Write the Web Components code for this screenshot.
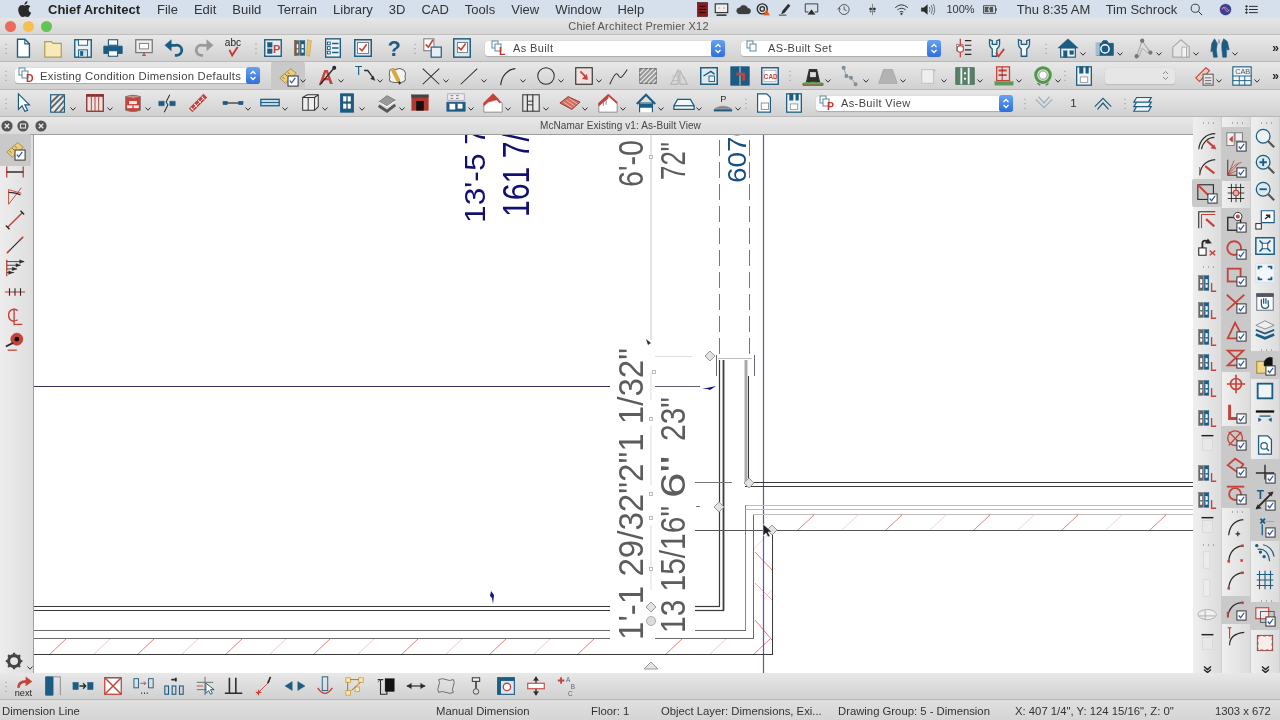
<!doctype html>
<html><head><meta charset="utf-8"><title>Chief Architect</title>
<style>
html,body{margin:0;padding:0;background:#ddd}
body{width:1280px;height:720px;overflow:hidden;font-family:"Liberation Sans",Arial,sans-serif;display:flex;flex-direction:column;color:#333;filter:blur(.35px)}
work-area{flex:none}
</style></head><body>
<menu-bar></menu-bar>
<title-bar>Chief Architect Premier X12</title-bar>
<tool-bar key="t1" style="height:27px"></tool-bar>
<tool-bar key="t2" style="height:28px"></tool-bar>
<tool-bar key="t3" style="height:27px"></tool-bar>
<work-area>
  <view-pane>
    <view-header>McNamar Existing v1: As-Built View</view-header>
    <view-row>
      <tool-bar key="left" vertical origin="135" class="lrail" style="width:34px"></tool-bar>
      <cad-canvas></cad-canvas>
    </view-row>
  </view-pane>
  <tool-bar key="r1" vertical origin="117" rail style="width:29px"></tool-bar>
  <tool-bar key="r2" vertical origin="117" rail style="width:29px"></tool-bar>
  <tool-bar key="r3" vertical origin="117" rail style="width:29px"></tool-bar>
</work-area>
<tool-bar key="bot" style="height:27px"></tool-bar>
<status-bar></status-bar>
<script>
const T='#1d5c82',R='#c5433b',K='#2b2b2b',G='#a9a9a9',LG='#c4c4c4';
const P=(d,c=K,w=1.4,f='none')=>`<path d="${d}" stroke="${c}" stroke-width="${w}" fill="${f}"/>`;
const Q=(x,y,w,h,c=K,f='none',s=1.3)=>`<rect x="${x}" y="${y}" width="${w}" height="${h}" stroke="${c}" stroke-width="${s}" fill="${f}"/>`;
const C=(x,y,r,c=K,f='none',s=1.3)=>`<circle cx="${x}" cy="${y}" r="${r}" stroke="${c}" stroke-width="${s}" fill="${f}"/>`;
const X=(x,y,z,c,s,b='400')=>`<text x="${x}" y="${y}" font-size="${z}" fill="${c}" font-weight="${b}" font-family="Liberation Sans,sans-serif">${s}</text>`;
const B=Q(13,13,10,10,'#333','#fff',1.1)+P('M15 18l2 2.4 4-5.4','#2b55a8',1.3);
const BK=Q(3,4,5,16,'#555','#666',.5)+Q(9,4,5,16,T,T,.5)+Q(4.6,8,2,4,'#fff','#fff',.3)+Q(10.6,8,2,4,'#fff','#fff',.3)+Q(4.6,14,2,3,'#fff','#fff',.3)+Q(10.6,14,2,3,'#fff','#fff',.3);
const BL=BK+P('M17 12v9h5',R,1.5);
const ARC=P('M4 21C5 11 11 5 20 4',K,1.3);
const PALE=P('M6 4h13','#222',1.6)+Q(7,7,11,13,'#d8d8d8','#e8e8e8',1);
const ICONS={
new:P('M6 2.5h8l5 5V22H6z',T,1.5,'#fff')+P('M14 2.5v5h5',T,1.2),
open:P('M3 5h7l2 2h9v15H3z','#b49a58',1.3,'#f8e9b8'),
save:Q(3,3,18,19,T,'#eaf1f5',1.5)+Q(7,3,10,6,T,'#fff',1)+Q(7,14,10,8,T,'#cfdfe8',1)+Q(9,15.5,3,5,T,T,.3),
print:Q(7,3,10,6,T,'#fff',1.2)+P('M2 10h20v8H2z',T,1,T)+Q(7,15,10,6,T,'#fff',1.2),
present:Q(3,3,18,14,'#777','#eee',1.4)+Q(7,7,10,6,'#777','#fff',1)+P('M12 17v3','#c33',1.3)+P('M10 20h4','#c33',1.2),
undo:P('M8 9h6a6 5.5 0 0 1 1 11h-2',T,3)+P('M2 9l7-6v12z',T,.5,T),
redo:P('M16 9h-6a6 5.5 0 0 0-1 11h2','#9a9a9a',3)+P('M22 9l-7-6v12z','#9a9a9a',.5,'#9a9a9a'),
abc:X(2,10,11,'#222','abc')+P('M7 14l3 6 6-9','#c0392b',2),
ref:Q(3,3,18,18,T,'#e8eef2',1.5)+Q(6,6,5,5,T,T,.5)+Q(6,13,5,5,T,T,.5)+X(12,17,12,R,'P','700'),
books:BK+P('M17 3l4 1-2 17-3-1z','#d3a64a',1,'#e8c777')+Q(3,4,2,16,'#7a5a3a','#7a5a3a',.2),
list:Q(4,2,16,20,T,'#eef3f6',1.5)+P('M11 7h7M11 12h7M11 17h7',T,1.6)+Q(6,5.5,3,3,T,'#fff',1)+Q(6,10.5,3,3,T,'#fff',1)+Q(6,15.5,3,3,T,'#fff',1),
chk:Q(3,3,18,18,T,'#dde6ec',1.6)+Q(6,6,12,12,'#777','#fff',1)+P('M8 12l3 3 5-7',R,1.8),
help:X(5,21,24,T,'?','700'),
chk2:Q(2,2,11,13,'#777','#fff',1.1)+P('M4 8l3 3 5-8',R,1.8)+Q(10,11,11,11,T,'#e8eef2',1.3),
chk3:Q(3,2,18,20,T,'#dde6ec',1.6)+Q(7,6,11,11,'#777','#fff',1)+P('M8 11l3 3 5-7',R,1.8),
plan:Q(4,8,7,7,'#888','#fff',1)+P('M13 4h7M13 9h7M13 14h7M13 19h7',K,1.3)+P('M8 2v20',R,1.4)+C(8,13,3.5,R,'#fff'),
wrchk:P('M6 3v5c0 3 2 4 3 5v8h5v-8c1-1 3-2 3-5V3l-3 1v4h-5V4z',T,1.4,'#f2f6f8')+P('M13 17l3 4 6-8',R,2),
wr:P('M6 3v5c0 3 2 4 3 5v8h6v-8c1-1 3-2 3-5V3l-3 1v4h-6V4z',T,1.4,'#f2f6f8'),
house:P('M1 12L12 2l11 10z',T,.5,T)+Q(4,12,16,10,T,'#eef3f6',1.3)+Q(7,15,4,7,T,T,.4)+Q(14,15,4,4,T,T,.4),
cam:P('M3 7h5l2-3h4l2 3h5v13H3z',T,1,T)+C(12,13,4.5,'#fff',T,1.6)+Q(2,6,4,14,'#9fc0d4','#9fc0d4',.4),
cam3:P('M4 21L10 4l9 13',G,1.2)+C(10,4,1.7,'#777','#777')+C(4,21,1.7,'#777','#777')+C(19,17,1.7,'#777','#777')+P('M10 12l-3 9M10 12l8 7',G,1),
gh:P('M3 11L12 3l9 8v11H3z',G,1.3,'#e6e6e6')+Q(13,11,5,11,G,'#f5f5f5',1),
wk:P('M6 2l3 5-1 7 1 8H5l-1-7-2 1 1-9zM16 2l4 3 2 9-2 0-1-3v11h-4l-1-9 0-6z',T,.7,T)+Q(10,3,2,4,G,G,.2),
rule:P('M3 14L15 4l6 5L9 20z','#a98b3c',1,'#eccd7c')+P('M6 13l2 2M9 10l2 2M12 8l2 2','#7a6430',1)+Q(12,12,11,11,'#333','#fff',1.1)+P('M14 17l2 2.4 4-5.4','#2b55a8',1.3),
atext:X(4,21,22,R,'A','700')+P('M5 22L21 3',K,1.5)+C(21,3,1.5,K,K),
tarrow:X(1,11,13,T,'T')+P('M11 6h4l6 8',K,1.4)+P('M23 17l-5-2 3-3z',K,.3,K),
cloud:P('M4 6c2-3 4-1 6-1s3-2 6-1 4 1 5 4-1 3 0 6-2 5-5 5-3 0-6 0-5 0-6-2 1-3 0-5 0-4 0-6z','#666',1.1,'#f4f4f4')+P('M7 4l7 14','#d9a83f',4.4)+P('M14 18l1.4 3','#333',2),
xx:P('M3 4l18 17M21 4L3 21',K,1.1),
line:P('M3 21L21 4',K,1.1),
curve:P('M4 22C5 12 11 5 20 4',K,1.2),
circle:C(12,12,9,K,'none',1.1),
bx:Q(3,3,18,18,K,'#efe1df',1.2)+P('M8 7l7 7',R,2)+P('M16 16l-6-1 5-5z',R,.4,R),
spline:P('M2 21C6 12 9 7 11 11s3 5 10-6',K,1.1),
hatch:Q(3,4,18,16,'#666','#999',1)+P('M3 9l5-5M3 14l10-10M3 19L18 4M7 20L21 6M12 20l9-9M17 20l4-4','#eee',1.2),
pers:P('M3 21h8V5zM13 21h8L13 6z','#aaa',1)+P('M5 17h6M15 14h4M5 12h6','#bbb',1),
ele:Q(3,3,18,18,T,'#dfe9ef',1.6)+P('M6 12l8-5 4 3',T,1.5)+Q(12,12,6,6,T,'#eee',1),
sect:Q(2,2,20,20,T,T,1)+P('M12 2v20','#cfe0ea',1)+P('M8 10h8v7',R,3),
cad:Q(3,3,18,18,T,'#e8eef2',1.5)+Q(5.5,6,13,12,'#aaa','#fff',.8)+X(5.3,15,7,R,'CAD','700'),
term:P('M5 18L8 5h8l3 13z','#333',1.2,'#2e2e2e')+Q(9,8,6,5,'#fff','#ddd',.4)+P('M1 20q11-3 22 0v2H1z','#3e8a3a',1,'#6cab5d')+P('M1 22h22',R,1.3),
pts:P('M4 3l3 9 5 2 5 7',G,1.2)+C(4,3,1.5,'#7f8f9a','#7f8f9a')+C(7,12,1.5,'#7f8f9a','#7f8f9a')+C(12,14,1.5,'#7f8f9a','#7f8f9a')+C(17,21,1.5,'#7f8f9a','#7f8f9a'),
mound:P('M2 20L7 5h10l5 15z','#aaa',1,'#b2b2b2'),
bnd:Q(4,5,13,15,LG,'#eee',1.2)+P('M18 4v4M16 6h4',LG,1),
rails:Q(2,3,20,18,'#3f6b4c','#5a7f66',1)+P('M8 3v18M16 3v18','#eef',2)+P('M12 8v2M12 14v2','#fff',2),
redh:Q(4,2,14,15,R,'#e8d6d6',1.4)+P('M6 6h9M6 11h9',R,2)+Q(2,18,20,4,'#5f9a55','#5f9a55',.4)+P('M10 2v15','#733',1),
wreath:C(12,11,8,'#4d9a45','none',3.2)+C(12,11,4.5,'#888','#fff',1)+P('M6 20l3 2M18 20l-3 2','#666',1.4),
floorp:Q(4,2,16,20,T,'#eef3f6',1.4)+Q(7,2,4,7,T,T,.4)+Q(14,2,3,7,T,T,.4)+Q(8,13,8,6,'#999','#fff',1),
calc:P('M3 14L14 3l4 3L7 18z',R,1.2,'#f0c9b9')+Q(11,10,11,12,'#555','#e8e8e8',1.1)+P('M13 14h7M13 17h7M13 20h7','#555',.9),
cab:Q(2,2,20,20,T,'#f0f4f6',1.2)+X(4.5,10,8,'#456','CAB')+P('M2 12h20M2 17h20M9 12v10M15 12v10',T,1),
arrow:P('M7 2v17l4-4 3 6 3-1-3-6h5z',T,1.3,'#fff'),
wallp:Q(4,3,15,19,T,'#e4edf2',1.3)+P('M4 12l9-9M4 18L19 3M8 22L19 9M14 22l5-6','#666',2),
railing:Q(3,3,18,18,'#8b2a2a','#efe3e0',1.4)+P('M3 4h18','#8b2a2a',2.4)+P('M8 3v18M12 3v18M16 3v18','#a84a44',1.1),
cabi:P('M4 5q8-3 16 0v15q-8 3-16 0z','#777',1,'#ce4034')+P('M4 5q8 3 16 0','#777',1.2,'#d6d6d6')+Q(8,10,8,3,'#fff','#eee',.4)+Q(6,15,5,2.4,'#fff','#eee',.4)+Q(13,15,5,2.4,'#fff','#eee',.4),
brk:P('M3 10h6v5H3zM15 10h6v5h-6z',T,.5,T)+P('M15 3L11 11l2 3-4 8',K,1.1),
stairs:P('M4 20L20 4',R,5.6)+P('M7 18L18 7','#fff',.9)+P('M4 17l3 3M8 13l3 3M12 9l3 3M16 5l3 3','#fff',1.1),
dim1:P('M2 12h20',K,1.3)+Q(1,10,5,4,T,T,.3)+Q(18,10,5,4,T,T,.3),
dim2:Q(2,8,20,7,T,'#c3dde8',1.4)+P('M2 11.5h20',T,1.1),
cabinet:P('M4 6l5-3h12v13l-4 4H4z','#333',1.1,'#eee')+P('M4 6h13v14M17 6l4-3M10 6v14','#333',1.1),
door2:Q(5,2,14,20,T,T,1)+Q(8,5,3,5,'#fff','#fff',.4)+Q(13,5,3,5,'#fff','#fff',.4)+Q(8,13,3,5,'#fff','#fff',.4)+Q(13,13,3,5,'#fff','#fff',.4),
stepsq:P('M3 11l9-7 9 5-9 6z','#777',1,'#999')+P('M3 15l9 6 9-7','#555',3)+P('M3 11l9 5 9-6','#fff',1.1),
fire:Q(3,4,18,16,'#b13a30','#b13a30',.5)+Q(3,3,18,3,'#444','#444',.4)+Q(8,10,8,10,'#111','#111',.4),
win:Q(3,2,18,7,'#99b','#eee',.8)+P('M6 4h3M12 4h3M6 7h3M12 7h3','#777',1)+Q(2,11,20,10,T,T,.6)+Q(5,13,6,6,'#fff','#fff',.2)+Q(14,13,5,5,'#fff','#fff',.2),
roofr:P('M2 12L12 2l10 10v10H2z','#888',1,'#fff')+P('M2 12L12 2l6 6-11 3-5 4z',R,.7,R)+P('M12 3l8 9',R,2),
cols:Q(3,3,18,18,'#555','#e8e8e8',1.4)+P('M8 3v18M14 3v18',K,1.2)+P('M8 10h6M8 14h6',K,1),
roofp:P('M1 12l9-7 13 6-9 8z','#8f3a33',1,'#d26c5e')+P('M5 11l9 6M8 9l9 6M11 7l9 6','#f4d8c8',.8),
roofh:P('M2 12l10-9 10 9v10H2z','#888',1,'#fff')+P('M12 3l-10 9v3l10-8z',R,1,R)+P('M12 3l10 9',R,2)+P('M7 11v4M10 9v5','#888',1),
arch:P('M2 13L12 3l10 10',T,2.4)+P('M5 22V12h14v10',T,1.3,'#fff')+Q(5,13,14,4,T,T,.4),
slab:P('M1 15l4-7h14l4 7v4H1z',T,1.4,'#f4f7f9')+P('M1 15h22',T,1.4),
lvl:X(9,11,10,K,'P')+P('M3 18q9-5 18 0z','#666',.4,'#888')+P('M2 20h20',T,2.4),
doc2:P('M5 2h10l4 4v16H5z',T,1.3,'#fff')+Q(9,12,8,7,'#888','#fff',1),
dn:P('M3 8l9 9 9-9M6 5l6 7 6-7','#9bb0bd',1.3),
up:P('M3 16l9-9 9 9M6 19l6-7 6 7',T,1.3),
layers:P('M5 6h16l-3 5H2zM5 11h16l-3 5H2zM5 16h16l-3 5H2z',T,1.3,'#eef3f6'),
gear:C(11,11,6,'#444','none',3.4)+P('M11 2v4M11 16v4M2 11h4M16 11h4M4.5 4.5l3 3M14.5 14.5l3 3M17.5 4.5l-3 3M7.5 14.5l-3 3','#444',2.4),
dimtool:P('M3 6v12M21 6v12',R,1.4)+P('M3 12h18',K,1.6),
ang:P('M5 21L19 3',R,1)+P('M5 21V5l14 4',R,1)+P('M5 8q8 0 13 3',K,1.3),
lnrd:P('M4 20L20 4',R,1.6)+P('M2 18l4 4M18 2l4 4',K,1.6),
lnpl:P('M4 20L20 4',K,1.3)+P('M3 21l4-4M17 7l4-4',R,1.6),
lead:P('M3 3v18',R,1.4)+P('M3 5h19M3 9h15M3 13h11M3 17h8',K,.9)+P('M22 5l-5-2v4zM18 9l-5-2v4zM14 13l-5-2v4zM10 17l-5-2v4z',K,.3,K),
tape:P('M1 12h22',R,1.2)+P('M6 8v8M12 8v8M18 8v8',K,1.2),
center:P('M15 5c-5-3-10-1-10 5s5 8 10 5',R,1.5)+P('M11 3v18M11 20h9',R,1.5),
tilt:C(14,10,6.5,R,R,1)+C(14,10,2,'#111','#111')+P('M2 18l8-4',K,2)+P('M4 22h10',R,1.4),
arcs:P('M3 21C4 11 11 4 21 4M6 21C7 14 13 8 20 8',K,1.2)+P('M12 12l8 7',R,2.4)+P('M22 21l-6-1 4-4z',R,.3,R),
arc2:P('M4 21C5 11 11 5 21 4','#333',1.2)+P('M4 21v-9',R,1)+P('M10 11l10 8',R,2.4),
corner:Q(2,3,17,16,K,'none',1.2)+P('M2 3l15 15',R,2)+Q(13,13,10,10,'#333','#fff',1.1)+P('M15 18l2 2.4 4-5.4','#2b55a8',1.3),
corner2:P('M3 21V3h18',K,1.2)+P('M6 21V6h15',R,1.2)+P('M11 11l9 8',R,2.4),
rot:Q(3,13,8,8,K,'#fff',1.2)+P('M7 13V8a3 3 0 0 1 6 0',K,2)+P('M13 3l4 5h-7z',K,.3,K)+P('M15 16l6 5M21 16l-6 5',R,1.6),
bookL:BL,
pale:PALE,
paleN:Q(8,3,7,18,'#d8d8d8','#ececec',1),
paleO:P('M3 9c6-4 14-4 18 0s-4 9-10 8-11-4-8-8z','#aaa',1,'#eee')+P('M3 13h18M10 7v10','#aaa',1),
panel:Q(2,3,8,14,'#777','#f2f2f2',1)+P('M8 7l-3 3 3 3z',R,1,R)+Q(11,3,8,9,'#777','#eee',1)+B,
fan:P('M3 21V4M3 21h18',K,1)+P('M3 21L10 5M3 21L15 8M3 21L20 12',R,.9)+P('M3 21C6 13 12 8 18 7','#a44',.8)+B,
grid:P('M3 6h18M3 12h18M3 18h18M7 2v20M12 2v20M17 2v20',K,1)+C(12,12,3,R,'#ddb0a8',1.2),
sqc:Q(3,7,14,14,K,'none',1.5)+C(14,6,4.5,K,'#fff',1)+C(14,6,1.5,R,R)+B,
rc:C(10,11,7.5,R,'none',2)+B,
rs:Q(3,4,14,14,R,'none',2)+B,
rx:P('M2 3l19 17M21 3L2 20',R,2)+B,
rt:P('M11 3l9 17H3z',R,2)+B,
rh:P('M3 4h17L3 20h17z',R,2)+B,
cross:C(12,12,6,R,'none',1.8)+P('M12 2v20M2 12h20',R,1.8),
rl:P('M5 3v15h14',R,3.2)+B,
rcx:C(11,10,8,R,'none',1.5)+P('M4 3l15 15M18 3L4 18',R,1.3)+B,
rd:P('M3 10l8-7 9 6-6 9z',R,2)+B,
rtan:C(11,12,6.5,R,'none',2)+P('M2 4h19',R,2)+B,
arcp:ARC+P('M14 17v5M11.5 19.5h5',K,1.3),
arcd:ARC+Q(3,20,2.4,2.4,R,R,.3)+Q(18,3,2.4,2.4,R,R,.3)+Q(17,19,2.5,2.5,R,R,.3),
arcc:ARC+Q(3,20,2.4,2.4,R,R,.3)+Q(18,3,2.4,2.4,R,R,.3),
arcb:P('M3 20C4 11 9 5 18 4',K,1.3)+P('M3 20v-6',R,2)+Q(18,3,2.4,2.4,R,R,.3)+B,
arcv:P('M5 22C5 14 11 9 21 8',K,1.3)+P('M5 3v12',R,1.3)+P('M3 3h4',R,1.3),
zlens:C(10,9,7.5,T,'#eaf2f6',1.4)+P('M15 14l7 7','#555',2.4),
zin:C(10,9,7.5,T,'#dce9f1',1.4)+P('M6 9h8M10 5v8',T,2)+P('M15 14l7 7','#555',2.4),
zout:C(10,9,7.5,T,'#dce9f1',1.4)+P('M6 9h8',T,2)+P('M15 14l7 7','#555',2.4),
zcor:P('M8 16V3h14v13H8',T,1.3,'#fff')+Q(2,17,6,6,K,'#fff',1.1)+P('M12 12l5-4M13 8h4v3',K,1.6),
fitx:Q(2,3,20,18,T,'#eaf2f6',1.6)+P('M6 6l12 12M18 6L6 18',T,1.8)+Q(9,9,6,6,T,'#fff',1),
fitc:Q(2,2,20,20,'#cfe0ea','#f4f8fa',1)+P('M5 8V5h4M19 8V5h-4M5 16v3h4M19 16v3h-4',T,2),
hand:Q(3,3,18,18,'#778','#fff',1.2)+P('M3 3h18v3H3z','#556',1,'#556')+P('M8 14V9m2.5 5V8m2.5 6V8m2.5 7V10M8 14q0 5 4 5t4-4',T,1.4),
stack:P('M2 8l10-5 10 5-10 4z','#888',1,'#eee')+P('M2 13l10 4 10-4',T,2)+P('M2 18l10 4 10-4',T,3),
hsbd:Q(3,8,12,13,'#a98b3c','#f1d78a',1.2)+P('M11 9A7 7 0 0 1 20 4v9h-9z','#111',.5,'#111')+B,
bsq:Q(4,4,16,16,T,'#eef5f9',2),
barr:P('M2 6h20','#111',2.5)+P('M6 11h12',T,1.4)+P('M8 15l-3-2v4zM16 15l3-2v4z',T,.6,T),
dsrch:P('M5 2h10l4 4v16H5z',T,1.4,'#fff')+C(11,13,3.5,T,'#fff')+P('M13.5 15.5l3 3',T,1.5),
crs:P('M12 3v16M2 12h20',K,1.5)+B,
tar:X(3,11,13,T,'T','700')+P('M3 21L20 4',K,2)+P('M21 3l-6 1 4 4zM2 22l6-1-4-4z',K,.3,K)+B,
xln:P('M7 3l5 5M12 3L7 8',T,2)+P('M9 9v12',T,1.4)+P('M13 6h9',G,1.2)+B,
dcur:P('M4 8c8-1 12 4 13 13M10 3c6 1 11 6 12 13',T,1.3)+C(3,4,1.2,T,T)+C(7,11,1.2,T,T)+C(11,16,1.2,T,T),
bgrid:P('M3 6h18M3 12h18M3 18h18M6 2v20M12 2v20M18 2v20',T,1.2),
sqs:Q(2,3,14,12,R,'#eee',1.2)+Q(7,7,15,12,'#555','none',1)+B,
dsq:Q(4,4,16,16,'#333','none',1.6)+Q(4,4,16,16,'#c9463e','#f6eeea',1.6).replace('/>',' stroke-dasharray="3 3"/>'),
next:X(3,23,10,'#222','next')+P('M7 14q0-7 9-7',R,3)+P('M22 7l-7-5v10z',R,.3,R),
doorb:P('M4 2h8v20H4z',T,1,T)+P('M12 2h8v20','#888',1),
swap:Q(1,8,6,8,T,T,.4)+Q(17,8,6,8,T,T,.4)+P('M8 12h7M12 9l3 3-3 3',K,1.4),
xbox:Q(3,3,18,18,R,'#fff',1.4)+P('M3 3l18 18M21 3L3 21',R,1.6)+P('M3 3h18','#2e6d92',1),
movd:Q(1,4,5,10,T,'none',1)+Q(17,4,5,10,T,'none',1)+P('M8 9h6M12 7l2 2-2 2',R,1)+P('M9 20h1M12 20h1M15 20h1',K,1.6),
rept:P('M9 5h5M14 3v4',K,2)+Q(2,12,4,9,T,'none',1.2)+Q(10,12,4,9,T,'none',1.2)+Q(18,12,4,9,T,'none',1.2),
curs:P('M12 2v20M3 8h18M3 16h18','#666',1)+P('M3 12h7',R,1)+P('M13 9v11l3-3 2 4 2-1-2-4h4z',T,1,'#fff'),
ubar:P('M7 3v17M14 3v17M2 20h19',K,1.7),
pin:P('M3 21l14-14',R,1)+P('M15 9l3-7',K,1.8)+P('M2 19h6M5 16v6',R,1.3),
bow:P('M1 12l8-5v10zM23 12l-8-5v10z',T,.4,T),
mir:Q(9,2,6,15,T,'none',1)+P('M4 14q8 12 16 0',R,1.5),
sel:Q(2,3,5,5,'#c9a845','#f7e9ba',1)+Q(16,3,5,5,'#c9a845','#f7e9ba',1)+Q(2,17,5,5,'#c9a845','#f7e9ba',1)+Q(12,13,5,5,'#c9a845','#f7e9ba',1)+P('M4 8v9M7 5h9M8 17l10-9',R,.9),
fil:P('M3 5h6M6 5v16h7V8',K,1.2)+Q(11,4,10,14,'#111','#111',.4)+P('M3 8l3-3',R,1),
harr:P('M2 12h20',K,1.3)+P('M2 12l5-3v6zM22 12l-5-3v6z',K,.3,K),
wav:P('M4 5q4-2 8 0t8 0q2 3 0 7t0 7q-4 2-8 0t-8 0q-2-3 0-7t0-7z','#666',1),
ibar:Q(8,3,8,4,'#444','#eee',1.2)+P('M12 7v8',K,1.6)+C(12,18,3,'#444','#ddd',1),
pic:Q(3,3,18,18,T,T,1.4)+Q(6,6,15,15,T,'#dbe7ee',1)+C(13,13,4,R,'#fff',1.4),
bars:P('M12 2v20',K,1.4)+Q(3,9,18,6,R,'#fff',1.2)+P('M12 2l-3 4h6zM12 22l-3-4h6z',K,.3,K),
pab:P('M2 6h7M5.5 2.5v7',R,2)+X(11,8,7,'#567','A')+X(16,15,7,'#567','B')+X(13,23,7,'#567','C'),
film:Q(4,1,16,22,'#3b0b0b','#8a1a1a',1)+P('M7 7h10M7 12h10M7 17h10','#200',1.6),
face:Q(2,3,20,14,K,'#eee',1.8)+P('M8 9v1M16 9v1',K,2)+P('M4 21h16',K,2.4),
mcloud:P('M6 19a5 5 0 0 1 0-10 7 7 0 0 1 13 1 4.5 4.5 0 0 1 0 9z','#3d3d3d',.5,'#3d3d3d'),
cc:C(10,11,8,K,'none',2.2)+C(10,11,3.5,K,'none',2)+P('M17 12l5 9h-10z','#e25a1c',.3,'#e25a1c'),
pen:P('M18 3L9 14l-2 5 5-2L21 6z',K,.5,K)+P('M3 21h12',K,1.4),
air:P('M2 3h20v13h-5M7 16H2V3',K,1.4)+P('M12 12l6 8H6z',K,.3,K),
clock:C(13,12,8,K,'none',1.2)+P('M13 7v5l4 2',K,1.2)+P('M2 12l3-3 2 3',K,1),
dots:P('M12 3v18',K,.8)+C(9,11,1.6,K,K)+C(15,11,1.6,K,K)+C(9,15,1.2,'#777','#777')+C(15,15,1.2,'#777','#777'),
wifi:P('M2 9q10-9 20 0M5.5 12.5q6.5-5 13 0M9 16q3-2 6 0',K,1.5)+C(12,19,1.2,K,K),
vol:P('M2 9h4l6-5v16l-6-5H2z',K,.3,K)+P('M15 8q2 4 0 8M18 5q4 7 0 14M21 3q5 9 0 18','#444',1.1),
batt:Q(1,6,19,12,K,'none',1.2)+Q(3,8,13,8,'#333','#555',.3)+P('M21 10v4',K,1.6)+P('M11 7l-3 6h3l-2 4','#fff',1.2),
srch:C(10,10,6.5,K,'none',1.4)+P('M15 15l6 6',K,1.6),
siri:C(12,12,9,'#2c2f66','#3a3f93',.4)+P('M6 12q3-6 6 0t6 0','#d05ea4',2)+P('M7 10q5-5 10 4','#8ad',1.2),
mlist:C(4,7,1.3,K,K)+C(4,12,1.3,K,K)+C(4,17,1.3,K,K)+P('M8 7h14M8 12h14M8 17h14',K,1.6),
};
const BARS={
t1:'hd@6 new@23 open@53 save@83 print@113 present@144 undo@174 redo@204 abc@234 sep@256 ref@273 books@303 list@333 chk@363 help@394 sep@415 chk2@433 chk3@462'.split(' ').concat([
 {sel:'As Built',g:'L',x0:485,x1:725,tx:513},{sel:'AS-Built Set',g:'s',x0:741,x1:941,tx:768}],
 'plan@964 wrchk@995 wr@1024 sep@1046 house@1068~ cam@1105~ cam3@1144~ gh@1181~ wk@1220~'.split(' '),[{more:1,x:1275}]),
t2:['hd@6',{sel:'Existing Condition Dimension Defaults',g:'D',x0:15,x1:260,tx:40,tight:1},
 ...'rule@288!~ atext@326~ tarrow@365~ cloud@397 xx@431~ line@469~ curve@508~ circle@546~ bx@584~ spline@619 hatch@648 pers@679 ele@709 sect@740 cad@770 sep@790 term@813~ pts@851~ mound@888~ bnd@929~ rails@965~ redh@1004~ wreath@1043~ sep@1065 floorp@1084'.split(' '),
 {blank:1,x0:1105,x1:1175},'calc@1204~','cab@1242~',{more:1,x:1275}],
t3:['hd@6',...'arrow@23 wallp@58~ railing@95~ cabi@133~ brk@167 stairs@198 dim1@233~ dim2@270~ cabinet@310~ door2@347~ stepsq@387~ fire@420 win@456~ roofr@493~ cols@531~ roofp@570~ roofh@608~ arch@646~ slab@684~ lvl@723~ sep@746 doc2@764 floorp@794'.split(' '),
 {sel:'As-Built View',g:'P',x0:816,x1:1013,tx:841},'sep@1025','dn@1044',{text:'1',x0:1070,x1:1077},'up@1103','sep@1125','layers@1143'],
left:'rule@150! dimtool@172 ang@196 lnrd@220 lnpl@245 lead@268 tape@292 center@317 tilt@341 gear@662~'.split(' '),
r1:'dots@123 arcs@141 arc2@167 corner@193! corner2@220 rot@247 dots@267 bookL@283 bookL@310 bookL@337 bookL@362 bookL@388 bookL@418 pale@443 bookL@473 bookL@500 pale@525 dots@545 paleN@560 paleN@588 paleO@615 pale@642 dbl@669'.split(' '),
r2:'dots@123 panel@141! fan@167! grid@193 sqc@222! rc@249! rs@276! rx@303! rt@331! rh@358! cross@384 rl@413 rcx@440! rd@467! rtan@494! dots@512 arcp@527 arcd@553 arcc@580 arcb@610! arcv@636'.split(' '),
r3:'dots@123 zlens@139 zin@165 zout@192 zcor@219 fitx@246 fitc@273 hand@302 stack@329 dots@350 hsbd@365! bsq@391 barr@417 dsrch@445 crs@473! tar@500! xln@527! dcur@553 bgrid@580 dots@601 sqs@616! dsq@643 dbl@669'.split(' '),
bot:'hd@6 next@23 doorb@53 swap@83 xbox@113 movd@144 rept@174 curs@205 ubar@234 pin@265 bow@295 mir@325 sel@355 fil@386 harr@416 wav@446 ibar@476 pic@506 bars@536 pab@567'.split(' '),
menu:'film@702 face@721 mcloud@743 cc@763 pen@784 air@811 clock@843 dots@872 wifi@901 vol@927'.split(' ').concat([{text:'100%',x0:945,x1:976,lit:1},'batt@990',{text:'Thu 8:35 AM',x0:1015,x1:1092,lit:1,big:1},{text:'Tim Schrock',x0:1103,x1:1180,lit:1,big:1}],'srch@1196 siri@1225 mlist@1251'.split(' '))
};
class ToolIcon extends HTMLElement{
 connectedCallback(){
  const n=this.getAttribute('name'),s=+(this.getAttribute('size')||22),sh=this.attachShadow({mode:'open'});
  sh.innerHTML=`<style>:host{display:block;position:relative;width:${s}px;height:${s}px;flex:none}
  :host([active])::before{content:"";position:absolute;inset:var(--act,-3px);background:#c9c9c9;border-radius:2px}
  svg{position:relative;display:block;width:100%;height:100%;overflow:visible}
  .ch{position:absolute;left:100%;top:68%;width:6px;height:4px;margin-left:1px}</style>
  <svg viewBox="0 0 24 24">${ICONS[n]||''}</svg>${this.hasAttribute('menu')?'<svg class="ch" viewBox="0 0 6 4"><path d="M.5 .5L3 3.2 5.5 .5" fill="none" stroke="#333" stroke-width="1"/></svg>':''}`;
 }
}
customElements.define('tool-icon',ToolIcon);
class DropSelect extends HTMLElement{
 connectedCallback(){
  const sh=this.attachShadow({mode:'open'});
  const g=this.getAttribute('glyph'),L=this.getAttribute('label'),pad=+this.getAttribute('pad'),tr=this.hasAttribute('tight');
  sh.innerHTML=`<style>:host{display:flex;align-items:center;height:15px;background:#fff;border-radius:3px;position:relative;flex:none;font:${tr?11.3:11}px "Liberation Sans",sans-serif;color:#444;box-shadow:0 .5px 1px #aaa;letter-spacing:${tr?.26:.38}px}
  .g{position:absolute;left:${pad-22}px;top:-1px;width:17px;height:17px}
  .t{padding-left:${pad}px;white-space:nowrap;flex:1}
  .st{width:14px;height:17px;margin:-1px 0;background:linear-gradient(#67a3ef,#2e6fdb);border-radius:3px;display:flex}
  .st svg{width:14px;height:17px}</style>
  <svg class="g" viewBox="0 0 17 17"><rect x="1" y="1" width="6" height="7" fill="#fff" stroke="#5a8aa8" stroke-width="1"/><rect x="4" y="4" width="6" height="7" fill="#fff" stroke="#5a8aa8" stroke-width="1"/>${g==='s'?'':`<text x="8" y="15" font-size="10.5" font-weight="700" fill="#c0392b" font-family="Liberation Sans,sans-serif">${g}</text>`}</svg>
  <span class="t">${L}</span><span class="st"><svg viewBox="0 0 14 17"><path d="M4.5 7L7 4.5 9.5 7M4.5 10L7 12.5 9.5 10" fill="none" stroke="#fff" stroke-width="1.3"/></svg></span>`;
 }
}
customElements.define('drop-select',DropSelect);
class ToolBar extends HTMLElement{
 connectedCallback(){
  const v=this.hasAttribute('vertical'),org=+(this.getAttribute('origin')||0),sh=this.attachShadow({mode:'open'}),rail=this.hasAttribute('rail'),plain=this.getAttribute('key')==='menu';
  sh.innerHTML=`<style>:host{display:flex;flex:none;box-sizing:border-box;flex-direction:${v?'column':'row'};align-items:center;
   ${plain?'':v?(rail?'background:linear-gradient(90deg,#efefef,#dcdcdc);border-right:1px solid #cfcfcf;--act:-3px -4px;':'background:linear-gradient(90deg,#ededed,#dedede);border-right:1px solid #9d9d9d;padding-right:3px;--act:-5px -5px;'):'background:linear-gradient(#e8e8e8,#d1d1d1);border-bottom:1px solid #b8b8b8;--act:-3px -6px;'}}
   .hd,.sep{flex:none;width:2px;height:13px;background:radial-gradient(circle,#aaa 0.9px,transparent 1px) 0 0/2px 4.5px}
   .dots{flex:none;width:13px;height:2px;background:radial-gradient(circle,#aaa 0.8px,transparent 1px) 0 0/5px 2px}
   .txt{flex:none;font-size:11.5px;color:#333;text-align:center;white-space:nowrap}
   .more{flex:none;font:700 12px "Liberation Sans",sans-serif;color:#222;width:10px;text-align:center;letter-spacing:-1px}
   .dbl{flex:none;width:9px;height:7px}
   .blank{flex:none;height:16px;background:#e6e6e6;border-radius:3px;display:flex;justify-content:flex-end;align-items:center;padding-right:6px;box-sizing:border-box;box-shadow:0 .5px 1px #bbb}
   </style>`;
  let cur=org,size=+(this.getAttribute('isize')||22);
  const add=(el,start,len)=>{el.style[v?'marginTop':'marginLeft']=(start-cur)+'px';cur=start+len;sh.appendChild(el);return el;};
  for(const it of BARS[this.getAttribute('key')]){
   if(typeof it==='string'){
    const m=it.match(/^(\w+)@(\d+)([!~]*)$/),n=m[1],c=+m[2],f=m[3];
    if(n==='sep'||n==='hd'){const e=document.createElement('span');e.className='sep';add(e,c-1,2);continue;}
    if(n==='dots'&&v){const e=document.createElement('span');e.className='dots';add(e,c-1,2);continue;}
    if(n==='dbl'){const e=document.createElement('span');e.className='dbl';e.innerHTML='<svg viewBox="0 0 9 7" width="9" height="7" style="display:block"><path d="M1 .5l3.5 3L8 .5M1 3.5l3.5 3L8 3.5" fill="none" stroke="#222" stroke-width="1.4"/></svg>';add(e,c-3,7);continue;}
    const e=document.createElement('tool-icon');e.setAttribute('name',n);e.setAttribute('size',size);
    if(f.includes('!'))e.setAttribute('active','');if(f.includes('~'))e.setAttribute('menu','');
    add(e,c-size/2,size);
   }else if(it.sel){
    const e=document.createElement('drop-select');e.setAttribute('label',it.sel);e.setAttribute('glyph',it.g);e.setAttribute('pad',it.tx-it.x0);if(it.tight)e.setAttribute('tight','');
    e.style.width=(it.x1-it.x0)+'px';add(e,it.x0,it.x1-it.x0);
   }else if(it.blank){
    const e=document.createElement('span');e.className='blank';e.style.width=(it.x1-it.x0)+'px';
    e.innerHTML='<svg width="7" height="11" viewBox="0 0 7 11"><path d="M1 4l2.5-2.5L6 4M1 7l2.5 2.5L6 7" fill="none" stroke="#888"/></svg>';add(e,it.x0,it.x1-it.x0);
   }else if(it.more){
    const e=document.createElement('span');e.className='more';e.textContent='»';add(e,it.x-5,10);
   }else if(it.text){
    const e=document.createElement('span');e.className='txt';e.textContent=it.text;e.style.width=(it.x1-it.x0)+'px';
    if(it.lit){e.style.fontSize=it.big?'13px':'11px';e.style.color='#333';}
    add(e,it.x0,it.x1-it.x0);
   }
  }
 }
}
customElements.define('tool-bar',ToolBar);
class MenuBar extends HTMLElement{
 connectedCallback(){
  const sh=this.attachShadow({mode:'open'});
  sh.innerHTML=`<style>:host{display:flex;flex:none;height:18px;background:#d6e0ec;font:13px "Liberation Sans",sans-serif;color:#333;align-items:center}
  .ap{width:14px;height:16px;margin-left:18px;flex:none}
  .n{display:flex;gap:16px;margin-left:16px;flex:none;white-space:nowrap}
  b{color:#222;margin-right:1px}
  .x{flex:1;display:flex;justify-content:flex-end}</style>
  <svg class="ap" viewBox="0 0 14 16"><path d="M10.6 8.4c0-1.9 1.6-2.8 1.7-2.9-.9-1.3-2.3-1.5-2.8-1.5-1.2-.1-2.3.7-2.9.7s-1.5-.7-2.5-.7C2.8 4 1.6 4.8.9 6c-1.4 2.4-.4 6 1 8 .7 1 1.5 2 2.5 2 1 0 1.4-.6 2.6-.6s1.6.6 2.6.6 1.8-1 2.4-2c.8-1.1 1.1-2.2 1.1-2.3-.1 0-2.5-.9-2.5-3.3zM8.7 2.6c.5-.6.9-1.5.8-2.4-.8 0-1.7.5-2.3 1.2-.5.6-.9 1.5-.8 2.3.9.1 1.8-.4 2.3-1.1z" fill="#2a2a2a"/></svg>
  <div class="n"><b>Chief Architect</b><span>File</span><span>Edit</span><span>Build</span><span>Terrain</span><span>Library</span><span>3D</span><span>CAD</span><span>Tools</span><span>View</span><span>Window</span><span>Help</span></div>
  <div class="x"><menu-tray></menu-tray></div>`;
 }
}
customElements.define('menu-bar',MenuBar);
class MenuTray extends HTMLElement{
 connectedCallback(){
  this.attachShadow({mode:'open'}).innerHTML=`<style>:host{display:block;flex:none;width:630px}tool-bar{height:18px;width:630px}</style><tool-bar key="menu" isize="15" origin="650"></tool-bar>`;
 }
}
customElements.define('menu-tray',MenuTray);
class TitleBar extends HTMLElement{
 connectedCallback(){
  this.attachShadow({mode:'open'}).innerHTML=`<style>:host{display:flex;flex:none;height:17px;align-items:center;background:linear-gradient(#e6e6e6,#d6d6d6);border-bottom:1px solid #c0c0c0;box-sizing:border-box;font:11px "Liberation Sans",sans-serif;color:#555;letter-spacing:.2px}
  .d{display:flex;gap:7px;padding-left:5px;width:48px;flex:none}
  i{width:11px;height:11px;border-radius:50%;display:block}
  .t{flex:1;text-align:center;padding-right:56px}</style>
  <div class="d"><i style="background:#ec6a5e"></i><i style="background:#f4bf4f"></i><i style="background:#61c554"></i></div><div class="t"><slot></slot></div>`;
 }
}
customElements.define('title-bar',TitleBar);
class WorkArea extends HTMLElement{
 connectedCallback(){this.attachShadow({mode:'open'}).innerHTML=`<style>:host{display:flex;height:556px;flex:none}</style><slot></slot>`;}
}
customElements.define('work-area',WorkArea);
class ViewPane extends HTMLElement{
 connectedCallback(){this.attachShadow({mode:'open'}).innerHTML=`<style>:host{display:flex;flex-direction:column;width:1193px;flex:none}</style><slot></slot>`;}
}
customElements.define('view-pane',ViewPane);
class ViewRow extends HTMLElement{
 connectedCallback(){this.attachShadow({mode:'open'}).innerHTML=`<style>:host{display:flex;flex:1;min-height:0}</style><slot></slot>`;}
}
customElements.define('view-row',ViewRow);
class ViewHeader extends HTMLElement{
 connectedCallback(){
  const b=g=>`<svg width="12" height="12" viewBox="0 0 12 12"><circle cx="6" cy="6" r="5.6" fill="#555"/>${g}</svg>`;
  const x='<path d="M3.8 3.8l4.4 4.4M8.2 3.8L3.8 8.2" stroke="#eee" stroke-width="1.3"/>';
  this.attachShadow({mode:'open'}).innerHTML=`<style>:host{display:flex;height:18px;flex:none;align-items:center;background:linear-gradient(#e8e8e8,#dadada);border-bottom:1px solid #9e9e9e;box-sizing:border-box;font:10px "Liberation Sans",sans-serif;color:#444;letter-spacing:.08px}
  .b{display:flex;gap:4px;padding-left:1px;flex:none;width:53px}.b svg{flex:none}.b svg:last-child{margin-left:2px}
  .t{margin-left:486px;white-space:nowrap}</style>
  <div class="b">${b(x)}${b('<rect x="3.4" y="4" width="5.2" height="4" fill="none" stroke="#eee"/>')}${b(x)}</div><div class="t"><slot></slot></div>`;
 }
}
customElements.define('view-header',ViewHeader);
class StatusBar extends HTMLElement{
 connectedCallback(){
  const cells=[['Dimension Line',2],['Manual Dimension',436],['Floor: 1',591],['Object Layer: Dimensions, Exi...',661],['Drawing Group: 5 - Dimension',838],['X: 407 1/4", Y: 124 15/16", Z: 0"',1015],['1303 x 672',1215]];
  this.attachShadow({mode:'open'}).innerHTML=`<style>:host{display:block;height:20px;flex:none;background:linear-gradient(#dfdfdf,#d5d5d5);font:11.3px/22px "Liberation Sans",sans-serif;color:#333}
  .g{display:grid;grid-template-columns:${cells.map((c,i)=>(i<cells.length-1?cells[i+1][1]-c[1]:65)+'px').join(' ')};padding-left:2px}
  span{white-space:nowrap}</style><div class="g">${cells.map(c=>`<span>${c[0]}</span>`).join('')}</div>`;
 }
}
customElements.define('status-bar',StatusBar);
class CadCanvas extends HTMLElement{
 connectedCallback(){
  const D='#3a3a3a',M='#6a6a6a',L='#bdbdbd';
  const ln=(x1,y1,x2,y2,c=D,w=1,e='')=>`<line x1="${x1}" y1="${y1}" x2="${x2}" y2="${y2}" stroke="${c}" stroke-width="${w}" ${e}/>`;
  const rt=(x,y,len,size,c,s)=>`<text transform="translate(${x},${y}) rotate(-90)" font-size="${size}" fill="${c}" font-family="Liberation Sans,sans-serif" textLength="${len}" lengthAdjust="spacingAndGlyphs">${s}</text>`;
  const dia=(x,y)=>`<path d="M${x} ${y-5}l5 5-5 5-5-5z" fill="#e2e2e2" stroke="#999"/>`;
  const sq=(x,y)=>`<rect x="${x-1.5}" y="${y-1.5}" width="3" height="3" fill="#fff" stroke="#aaa" stroke-width=".8"/>`;
  let h='';
  for(let x=50,i=0;x<770;x+=44,i++){if(x>605&&x<650)continue;h+=ln(x,654,x+16,639,i%2?'#eebcbc':'#d9605a',.8);}
  for(let x=798,i=0;x<1190;x+=44,i++){h+=ln(x,530,x+16,515,i%2?'#f0c6c6':'#d9605a',.8);}
  [[755,552,772,570],[755,583,772,600],[755,620,772,640]].forEach((a,i)=>{h+=ln(...a,i==1?'#e29a9a':'#d9605a',.8)});
  h+=ln(763,600,772,590,'#f0c6c6',.7)+ln(753,550,772,530,'#f0c6c6',.7);
  this.attachShadow({mode:'open'}).innerHTML=`<style>:host{display:block;flex:1;background:#fff;overflow:hidden;position:relative;min-width:0}svg{display:block;width:100%;height:100%}</style>
  <svg viewBox="34 135 1159 538" preserveAspectRatio="none">
   ${h}
   ${ln(651,135,651,340,'#c9c9c9')}
   ${ln(719.5,140,719.5,356,'#777',1,'stroke-dasharray="16 6"')}
   ${ln(749.5,140,749.5,356,'#777',1,'stroke-dasharray="16 6"')}
   ${ln(763.5,135,763.5,674,'#5252d2',1.2)}
   ${ln(33,386.5,610,386.5,'#34345a')}${ln(655,386.5,700,386.5,'#34345a',.8)}
   <path d="M702 389l14-3-6 4-3-1z" fill="#14148a"/>
   ${ln(655,356.5,692,356.5,'#ddd')}
   ${ln(716.5,355,716.5,376,M)}${ln(754.5,355,754.5,376,M)}${ln(718,358.5,752,358.5,L)}
   ${ln(719.5,360,719.5,606.5,D,1.2)}${ln(723.5,360,723.5,610.5,D,1.8)}
   ${ln(746,360,746,484,'#aaa',3)}${ln(748.5,376,748.5,484,D,1)}
   ${ln(745,482.5,1193,482.5,D,1.1)}${ln(745,486.5,1193,486.5,D,1.1)}
   ${ln(745,505.5,1193,505.5,L)}${ln(745,509.5,1193,509.5,L)}
   ${ln(745.5,505,745.5,631,'#888')}
   ${ln(753.5,514,753.5,639,M)}${ln(753,514.5,1193,514.5,L)}
   ${ln(695,530.5,1193,530.5,'#555')}
   ${ln(772.5,530,772.5,655,D)}
   ${ln(695,482.5,732,482.5,'#777')}${ln(696,506.5,700,506.5,'#777')}
   ${ln(33,606.5,610,606.5,D,1.2)}${ln(33,610.5,610,610.5,D,1.2)}${ln(695,606.5,720,606.5,D,1.2)}${ln(695,610.5,724,610.5,D,1.2)}
   ${ln(33,630.5,610,630.5,M)}${ln(695,630.5,746,630.5,M)}
   ${ln(33,638.5,610,638.5,M)}${ln(655,638.5,754,638.5,M)}
   ${ln(33,654.5,773,654.5,D)}
   ${ln(651,372,651,400,'#ddd')}${ln(651,425,651,485,'#ddd')}${ln(651,525,651,590,'#ddd')}
   ${rt(485,223,96,30,'#101070','13\'-5 7')}
   ${rt(529,217,84,36,'#101070','161 7/')}
   ${rt(643,187,47,35,'#5c5c5c','6\'-0')}
   ${rt(685,180,38,35,'#5c5c5c','72"')}
   ${rt(746,183,62,26,'#174f80','6070')}
   ${rt(643,640,292,35,'#5c5c5c','1\'-1 29/32"2"1 1/32"')}
   ${rt(685,633,127,35,'#5c5c5c','13 15/16"')}
   ${rt(685,498,42,35,'#5c5c5c','6"')}
   ${rt(685,441,44,35,'#5c5c5c','23"')}
   <path d="M491 591l3 4-1 9-1-6-2-2z" fill="#14148a"/>
   <path d="M646 339l5 4-3 2z" fill="#333"/>
   ${sq(651,157)}${sq(651,419)}${sq(651,494)}${sq(651,518)}${sq(651,569)}${sq(654,372)}
   ${dia(710,356)}${dia(749,483)}${dia(719,507)}${dia(772,530)}${dia(651,607)}
   <circle cx="651" cy="621" r="4.5" fill="#ddd" stroke="#aaa"/>
   <path d="M651 662l7 7h-14z" fill="#e4e4e4" stroke="#999"/>
   <path d="M763 524l0 12 3-3 2 4 2-1-2-4 4 0z" fill="#222" stroke="#fff" stroke-width=".5"/>
  </svg>`;
 }
}
customElements.define('cad-canvas',CadCanvas);
</script>
</body></html>
